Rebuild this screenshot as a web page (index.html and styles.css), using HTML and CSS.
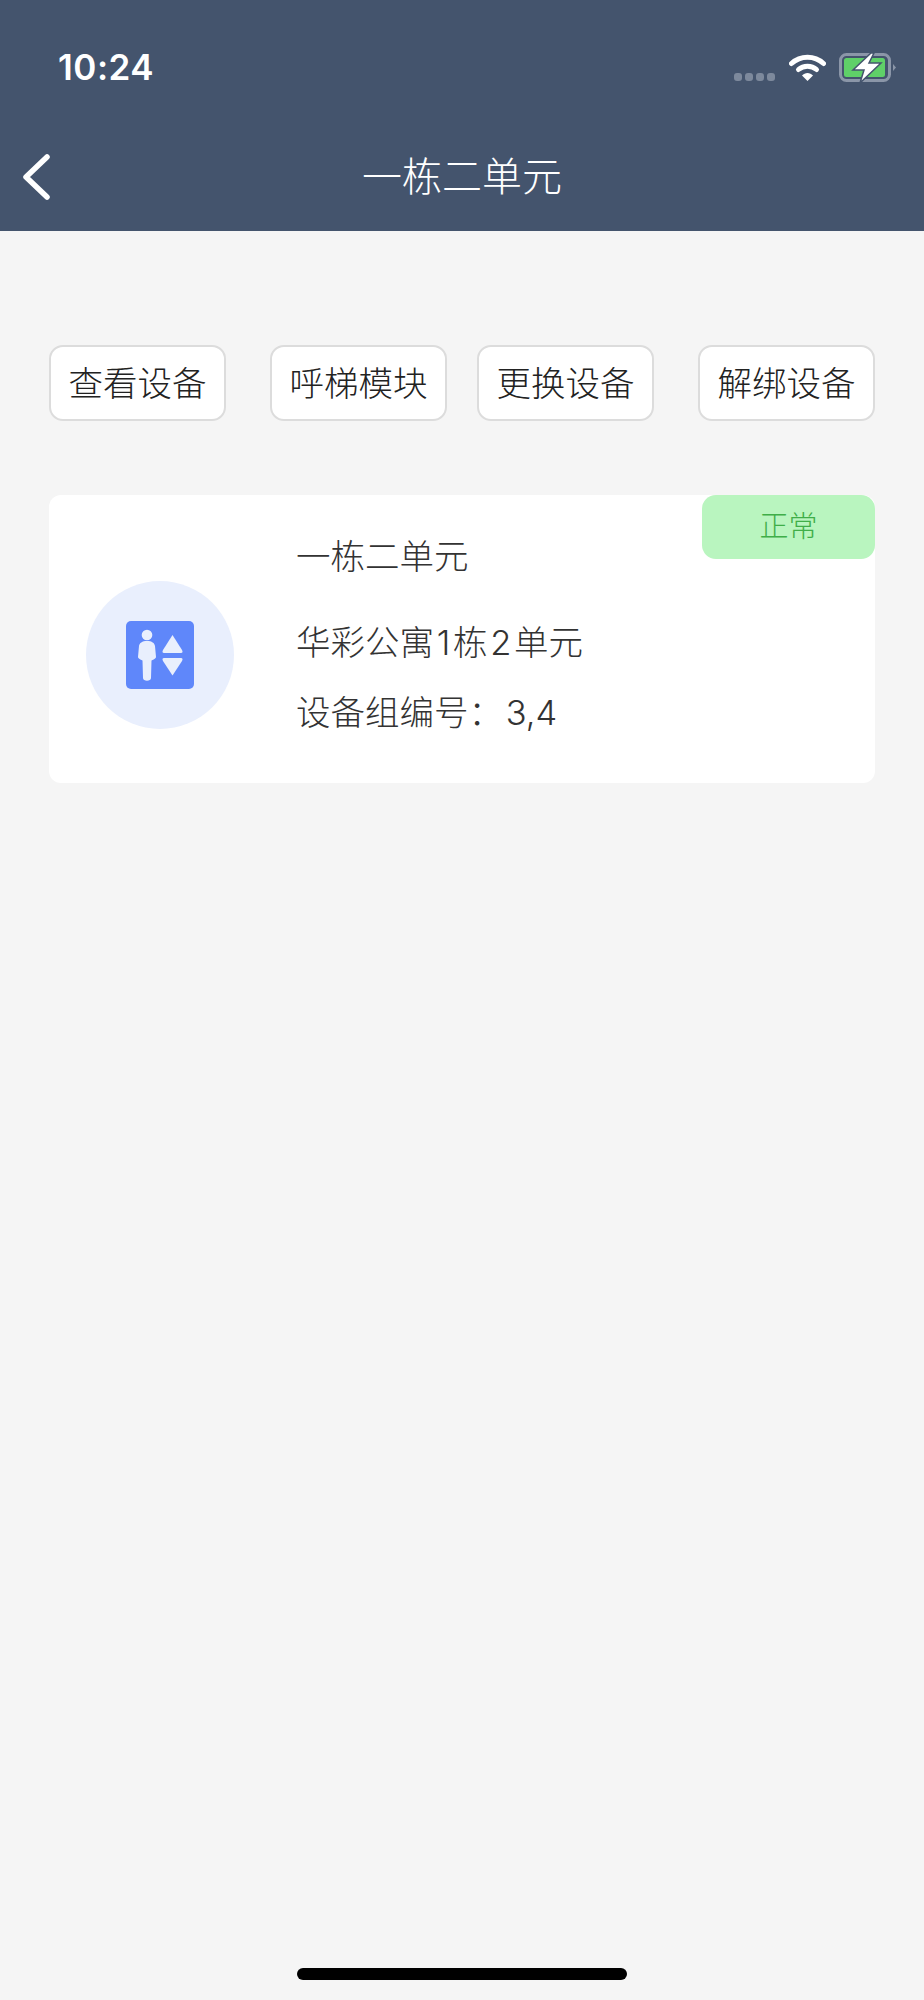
FILE: index.html
```html
<!DOCTYPE html>
<html lang="zh-CN">

<head>
  <meta charset="UTF-8">
  <meta name="viewport" content="width=device-width, initial-scale=1.0">
  <title>一栋二单元</title>
  <link rel="stylesheet" href="styles.css">
</head>

<body>
  <header class="top">
    <div class="status">
      <span class="time">10:24</span>
      <div class="status-icons">
        <div class="signal"><i></i><i></i><i></i><i></i></div>
        <svg class="wifi" width="37" height="28" viewBox="0 0 37 28">
          <path d="M2.500 10.500C11.500 2.200 25.500 2.200 34.500 10.500" fill="none" stroke="#fff" stroke-width="5" stroke-linecap="round" />
          <path d="M9.500 16.500C14.500 12 22.500 12 27.500 16.500" fill="none" stroke="#fff" stroke-width="5" stroke-linecap="round" />
          <path d="M13 22.500C16 19 21 19 24 22.500L18.500 28Z" fill="#fff" />
        </svg>
        <svg class="battery" width="57" height="30" viewBox="0 0 57 30">
          <rect x="1.500" y="1.500" width="49" height="26" rx="6" fill="none" stroke="#8b96a8" stroke-width="3" />
          <rect x="5" y="5" width="41" height="19" rx="2.500" fill="#5fd068" />
          <path d="M54 11L57 14.500L54 18Z" fill="#8b96a8" />
          <path d="M32 0L14 17H25L21 30L42 10H30L35 0Z" fill="#fff" stroke="#44546d" stroke-width="1.500" />
        </svg>
      </div>
    </div>
    <nav class="nav">
      <svg class="back" width="27" height="46" viewBox="0 0 27 46">
        <path d="M24 3L3 23L24 43" fill="none" stroke="#fff" stroke-width="5.500" stroke-linecap="round" stroke-linejoin="round" />
      </svg>
      <h1 class="nav-title">一栋二单元</h1>
    </nav>
  </header>

  <main class="content">
    <div class="actions">
      <div class="action-pair">
        <button class="action">查看设备</button>
        <button class="action">呼梯模块</button>
      </div>
      <div class="action-pair">
        <button class="action">更换设备</button>
        <button class="action">解绑设备</button>
      </div>
    </div>

    <section class="card">
      <div class="avatar">
        <svg width="68" height="68" viewBox="0 0 68 68">
          <rect width="68" height="68" rx="5" fill="#5f87fa" />
          <circle cx="21" cy="14" r="5.300" fill="#e9effd" />
          <path d="M21 20C26 20 28.500 22 29 25L30 36C30 37 29 38 25.500 39.500L25 57C25 60.500 17 60.500 17 57L16.500 39.500C13 38 12 37 12 36L13 25C13.500 22 16 20 21 20Z" fill="#e9effd" />
          <path d="M46.500 14L56 29C57 31 56.500 32 55 32H38C36.500 32 36 31 37 29Z" fill="#e9effd" />
          <path d="M46.500 54.500L56 40C57 38 56.500 37 55 37H38C36.500 37 36 38 37 40Z" fill="#e9effd" />
        </svg>
      </div>
      <div class="info">
        <div class="info-name">一栋二单元</div>
        <div class="info-line">华彩公寓 1 栋 2 单元</div>
        <div class="info-line">设备组编号： 3,4</div>
      </div>
      <span class="badge">正常</span>
    </section>
  </main>

  <div class="home-bar"></div>
</body>

</html>
```

FILE: styles.css
```css
* {
  box-sizing: border-box;
}

body {
  margin: 0;
  height: 2000px;
  background-color: #f5f5f5;
  font-family: Inter, "Noto Sans CJK SC", sans-serif;
  color: #333;
  overflow: hidden;
  display: flex;
  flex-direction: column;
}

.top {
  height: 231px;
  background-color: #44546d;
  color: #fff;
}

.status {
  height: 124px;
  padding: 48px 28px 0 58px;
  display: flex;
  justify-content: space-between;
  align-items: flex-start;
}

.time {
  font-size: 35px;
  font-weight: 600;
  line-height: 38px;
  letter-spacing: 0.5px;
}

.status-icons {
  display: flex;
  align-items: flex-start;
  padding-top: 5px;
}

.signal {
  display: flex;
  gap: 3px;
  margin-top: 20px;
  margin-right: 14px;
}

.signal i {
  width: 8px;
  height: 8px;
  border-radius: 3px;
  background-color: #7d899c;
}

.wifi {
  margin-right: 13px;
}

.nav {
  height: 107px;
  position: relative;
  display: flex;
  align-items: flex-start;
  justify-content: center;
}

.back {
  position: absolute;
  left: 23px;
  top: 30px;
}

.nav-title {
  margin: 28px 0 0;
  font-size: 40px;
  font-weight: 300;
  line-height: 50px;
}

.content {
  flex: 1;
  padding: 114px 49px 0;
}

.actions {
  display: flex;
  justify-content: space-between;
}

.action-pair {
  display: flex;
  gap: 44px;
}

.action {
  width: 177px;
  height: 76px;
  padding: 0 0 5px;
  background-color: #fff;
  border: 2px solid #dcdcdc;
  border-radius: 14px;
  font-family: inherit;
  font-size: 34.500px;
  font-weight: 300;
  color: #222;
}

.card {
  position: relative;
  height: 288px;
  margin-top: 74px;
  padding-left: 37px;
  background-color: #fff;
  border-radius: 12px;
  display: flex;
}

.avatar {
  width: 148px;
  height: 148px;
  margin-top: 86px;
  border-radius: 50%;
  background-color: #e9effd;
  display: flex;
  align-items: center;
  justify-content: center;
}

.info {
  margin-left: 62px;
  padding-top: 37px;
  font-size: 34.500px;
  font-weight: 300;
  line-height: 50px;
  word-spacing: -7px;
}

.info-name {
  margin-bottom: 36px;
}

.info-line {
  margin-bottom: 20px;
}

.badge {
  position: absolute;
  right: 0;
  top: 0;
  width: 173px;
  height: 64px;
  border-radius: 14px;
  background-color: #b9f5bf;
  color: #3fae48;
  font-size: 29px;
  font-weight: 300;
  line-height: 64px;
  text-align: center;
}

.home-bar {
  position: absolute;
  left: 297px;
  top: 1968px;
  width: 330px;
  height: 12px;
  border-radius: 6px;
  background-color: #000;
}
```
